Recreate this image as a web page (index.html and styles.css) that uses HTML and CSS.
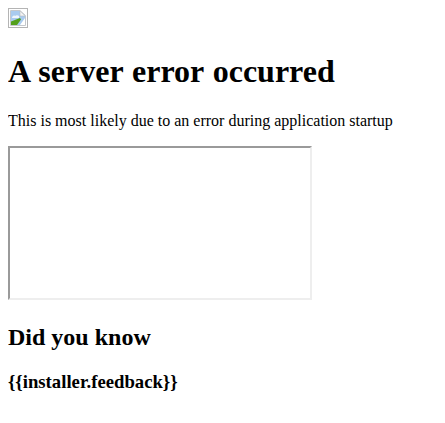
FILE: index.html
```html
<!DOCTYPE html>
<html>
<head>
  <title>Server Error</title>
  <link rel="stylesheet" href="styles.css">
</head>
<body>
  <svg class="broken-img" width="20" height="20" viewBox="0 0 20 20">
    <rect x="0.5" y="0.5" width="19" height="19" fill="#fff" stroke="#b4b4b4"/>
    <path d="M2.500 2.500H12l5.500 5V17.500H2.500z" fill="#fff" stroke="#c4c8cc"/>
    <path d="M3 3h9v5h5v2l-5 7H3z" fill="#a9cbef"/>
    <path d="M4 10c0-2 2-3 3-2 1-1 3-1 4 0v2z" fill="#eef5fc"/>
    <path d="M3 17v-3.500l9-3.500 1 1.500-4 5.500z" fill="#54a01c"/>
    <path d="M12 3v5h5z" fill="#f4f4f4" stroke="#b8bcc0" stroke-width="0.6"/>
  </svg>
  <h1>A server error occurred</h1>
  <p>This is most likely due to an error during application startup</p>
  <iframe class="frame" title="details"></iframe>
  <h2>Did you know</h2>
  <h3>{{installer.feedback}}</h3>
</body>
</html>
```

FILE: styles.css
```css
body {
  font-family: "Liberation Serif", serif;
  color: #000;
  background-color: #fff;
}

h1 {
  word-spacing: 1px;
}

.broken-img {
  display: inline-block;
}

.frame {
  display: inline-block;
}
```
